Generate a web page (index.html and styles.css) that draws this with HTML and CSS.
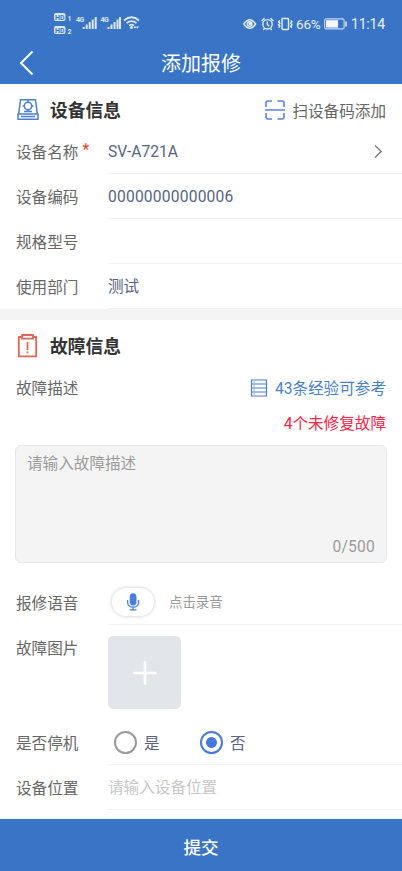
FILE: index.html
```html
<!DOCTYPE html>
<html lang="zh-CN">
<head>
<meta charset="utf-8">
<meta name="viewport" content="width=device-width, initial-scale=1">
<title>添加报修</title>
<link rel="stylesheet" href="styles.css">
</head>
<body>
<div class="app">
  <header class="top">
    <div class="status">
      <svg class="signals" width="90" height="26" viewBox="0 0 90 26">
        <g fill="#dce8f9">
          <rect x="0" y="1" width="11.500" height="8" rx="2"/>
          <rect x="0" y="14" width="11.500" height="8" rx="2"/>
          <path d="M29 15h2v2h-2zM32 12.500h2v4.500h-2zM35 10h2v7h-2zM38 7.500h2v9.500h-2zM41 5h2v12h-2z" transform="translate(-.3 0)"/>
          <path d="M53.500 15h2v2h-2zM56.500 12.500h2v4.500h-2zM59.500 10h2v7h-2zM62.500 7.500h2v9.500h-2zM65 5h2v12h-2z"/>
          <circle cx="77.500" cy="15.500" r="1.500"/>
          <path d="M79.500 16l1.500-2.300 1.500 2.300zM82 14.500l1.500 2.300 1.500-2.300z"/>
        </g>
        <g fill="none" stroke="#dce8f9" stroke-width="1.700">
          <path d="M70 8.500q7.500-6.500 15 0M72.500 11.200q5-4.200 10 0M75 13.600q2.500-2 5 0"/>
        </g>
        <g class="tiny">
          <text class="hd" x="1" y="7.600">HD</text>
          <text class="hd" x="1" y="20.600">HD</text>
          <text x="13.500" y="9">1</text>
          <text x="13.500" y="22">2</text>
          <text class="net" x="22" y="10.300">4G</text>
          <text class="net" x="46.500" y="10.300">4G</text>
        </g>
      </svg>
      <div class="status-right">
        <svg width="51" height="16" viewBox="0 0 51 16" fill="none" stroke="#e4edfa" stroke-width="1.400">
          <path d="M.8 8q5.900-8.500 11.800 0q-5.900 8.500-11.800 0z"/>
          <circle cx="6.700" cy="8" r="2.300"/><circle cx="7.200" cy="7.600" r="1" fill="#e4edfa"/>
          <circle cx="24.500" cy="8.300" r="4.700"/>
          <path d="M18.600 5l3-2.800M30.400 5l-3-2.800M24.300 5.500v3l2 1.700M21.500 12.500l-1.200 1.500M27.500 12.500l1.200 1.500"/>
          <rect x="39" y="2.500" width="6.500" height="11" rx=".7"/>
          <path d="M36.800 4.500l-1.200 1.300 1.200 1.500-1.200 1.500 1.200 1.500-1.200 1.500M47.700 4.500l1.200 1.300-1.200 1.500 1.200 1.500-1.200 1.500 1.200 1.500"/>
        </svg>
        <span class="percent">66%</span>
        <svg class="battery" width="24" height="12" viewBox="0 0 24 12">
          <rect x=".6" y=".9" width="19.500" height="10" rx="1.500" fill="none" stroke="#c6d9f3" stroke-width="1.100"/>
          <path d="M2 2.200h12v7.400H2z" fill="#f2f7ff"/><path d="M21.300 3.500h1.500v5h-1.500z" fill="#e4edfa"/>
        </svg>
        <span class="clock">11:14</span>
      </div>
    </div>
    <div class="nav">
      <svg class="back" width="16" height="26" viewBox="0 0 16 26"><path d="M13.500 1.500L2 13l11.500 11.500" fill="none" stroke="#fff" stroke-width="1.900"/></svg>
      <h1>添加报修</h1>
    </div>
  </header>

  <main>
    <section class="device">
      <div class="heading">
        <svg class="heading-icon" width="24" height="24" viewBox="0 0 24 24" fill="none" stroke="#4a7fd0" stroke-width="1.500">
          <path d="M4.500 1.700h15l1.800 14.300H2.700zM2 16h20v5.200H2zM5 18.600h14" stroke-linejoin="round"/>
          <circle cx="12" cy="8" r="3.700"/><path d="M12 1.700v3M12 11.700v2.200M8 13.600h8M6.600 8h1.700M15.700 8h1.700"/>
        </svg>
        <h2>设备信息</h2>
        <div class="scan">
          <svg width="20" height="20" viewBox="0 0 20 20" fill="none" stroke="#5b84e5" stroke-width="1.600">
            <path d="M1 7V3q0-2 2-2h4M12.500 1H17q2 0 2 2v4M1 13v4q0 2 2 2h4M12.500 19H17q2 0 2-2v-4M0 10h20"/>
          </svg>
          <span>扫设备码添加</span>
        </div>
      </div>
      <div class="row">
        <label>设备名称<i class="required">*</i></label>
        <div class="value">SV-A721A
          <svg class="chevron" width="9" height="15" viewBox="0 0 9 15"><path d="M1 1.500l6.200 6L1 13.500" fill="none" stroke="#777" stroke-width="1.300"/></svg>
        </div>
      </div>
      <div class="row"><label>设备编码</label><div class="value digits">00000000000006</div></div>
      <div class="row"><label>规格型号</label><div class="value"></div></div>
      <div class="row"><label>使用部门</label><div class="value">测试</div></div>
    </section>

    <section class="fault">
      <div class="heading">
        <svg class="heading-icon" width="24" height="26" viewBox="0 0 24 26" fill="none" stroke="#e06458" stroke-width="1.800">
          <path d="M6 4H2.800v19.400h17.400V4H17M6 2h11v3.700H6z" stroke-linejoin="round"/>
          <path d="M11.500 9v8M11.500 18.500v1.700"/>
        </svg>
        <h2>故障信息</h2>
      </div>
      <div class="describe">
        <label>故障描述</label>
        <div class="links">
          <div class="experience">
            <svg width="18" height="18" viewBox="0 0 18 18" fill="none" stroke="#4a7fcc" stroke-width="1.200">
              <path d="M1.500 1h15v16h-15zM1.500 5h15M1.500 9h15M1.500 13h15"/>
              <path d="M3.500 3h1.200M3.500 7h1.200M3.500 11h1.200M3.500 15h1.200"/>
            </svg>
            <span>43条经验可参考</span>
          </div>
          <div class="unrepaired">4个未修复故障</div>
        </div>
      </div>
      <div class="textbox"><span>请输入故障描述</span><span class="count">0/500</span></div>
      <div class="row voice">
        <label>报修语音</label>
        <div class="value">
          <span class="mic"><svg width="14" height="18" viewBox="0 0 14 18">
            <rect x="3.700" y=".3" width="6.800" height="12.200" rx="3.400" fill="#4c7de0"/>
            <path d="M1.600 7v2.200c0 6.600 11 6.600 11 0V7M7.100 14v2.700M3.700 16.800h6.800" fill="none" stroke="#4c7de0" stroke-width="1.300"/>
          </svg></span>
          <span class="record">点击录音</span>
        </div>
      </div>
      <div class="photo">
        <label>故障图片</label>
        <div class="add"><svg width="24" height="24" viewBox="0 0 24 24"><path d="M12 1.500v21M1.500 12h21" stroke="#fff" stroke-width="2.500" stroke-linecap="round"/></svg></div>
      </div>
      <div class="row">
        <label>是否停机</label>
        <div class="value options">
          <span class="option"><i class="radio"></i><span>是</span></span>
          <span class="option"><i class="radio checked"></i><span>否</span></span>
        </div>
      </div>
      <div class="row"><label>设备位置</label><div class="value placeholder">请输入设备位置</div></div>
    </section>
  </main>
  <footer>提交</footer>
</div>
</body>
</html>
```
FILE: styles.css
```css
* { box-sizing: border-box; }
body {
  margin: 0;
  background: #fff;
  font-family: Roboto, "Noto Sans CJK SC", sans-serif;
  font-size: 15.6px;
  line-height: 24px;
  color: #666;
}
svg { display: block; flex: none; }
h1, h2 { margin: 0; }
i { font-style: normal; }
.app { width: 402px; height: 871px; display: flex; flex-direction: column; overflow: hidden; }
.top { height: 84px; flex: none; background: #3a74c7; color: #fff; }
.status { height: 40px; padding: 12px 17px 0 54px; display: flex; justify-content: space-between; }
.tiny { fill: #dce8f9; font-family: Roboto, sans-serif; font-size: 7px; font-weight: 700; }
.tiny .hd { fill: #3a74c7; font-size: 7px; }
.tiny .net { font-size: 7px; font-weight: 700; letter-spacing: -.6px; }
.status-right { display: flex; align-items: center; height: 24px; color: #e8f0fc; font-size: 14px; }
.percent { margin-left: 2px; width: 27px; font-size: 13.5px; letter-spacing: -.2px; }
.battery { margin-left: 1px; }
.clock { margin-left: 3px; width: 34px; font-size: 14px; letter-spacing: -.2px; white-space: nowrap; }
.nav { height: 44px; display: grid; grid-template-columns: 60px 1fr 60px; align-items: center; }
.back { margin-left: 19px; }
.nav h1 { padding-top: 2px; text-align: center; font-size: 20px; font-weight: 400; line-height: 44px; }
.device { height: 225px; }
.heading { height: 45px; padding: 7px 16px 0 16px; display: flex; align-items: center; }
.heading h2 { margin-left: 10px; padding-top: 2px; font-size: 17.8px; font-weight: 700; color: #333; }
.scan { margin-left: auto; display: flex; align-items: center; gap: 7px; }
.scan span { padding-top: 3px; }
.row { height: 45px; padding-left: 16px; display: flex; }
.row label { width: 92px; flex: none; line-height: 48px; white-space: nowrap; }
.required { margin-left: 4px; color: #f2402e; position: relative; top: -3px; }
.value { flex: 1; display: flex; align-items: center; padding-top: 2px; border-bottom: 1px solid #f1f1f1; color: #566482; }
.digits { letter-spacing: .2px; }
.chevron { margin: -2px 19px 0 auto; }
.fault { border-top: 11px solid #f4f4f4; }
.describe { height: 80px; padding: 12px 16px 0; display: flex; justify-content: space-between; }
.links { display: flex; flex-direction: column; align-items: flex-end; gap: 11px; }
.experience { display: flex; align-items: center; gap: 7px; color: #4a7fcc; }
.experience svg { margin-top: -3px; }
.unrepaired { color: #ff2348; }
.textbox {
  height: 118px;
  margin: 0 15px 17px;
  padding: 6px 11px 3px;
  display: flex;
  flex-direction: column;
  justify-content: space-between;
  border: 1px solid #e6e8ea;
  border-radius: 6px;
  background: #f4f4f4;
  color: #9b9b9b;
}
.count { align-self: flex-end; letter-spacing: .2px; }
.mic {
  width: 42px;
  height: 28px;
  margin: 0 0 3px 4px;
  display: flex;
  align-items: center;
  justify-content: center;
  border-radius: 14px;
  box-shadow: 0 0 3px 1px #ddd;
}
.record { margin-left: 15px; font-size: 13.4px; color: #999; }
.photo { height: 95px; padding-left: 16px; display: flex; }
.photo label { width: 92px; line-height: 48px; }
.add {
  width: 73px;
  height: 73px;
  margin-top: 11px;
  display: flex;
  align-items: center;
  justify-content: center;
  border-radius: 5px;
  background: #e2e6eb;
}
.options { padding: 0 0 0 6px; }
.option { width: 86px; display: flex; align-items: center; gap: 7px; }
.option span { padding-top: 3px; }
.radio { width: 23px; height: 23px; border: 2px solid #999; border-radius: 50%; }
.checked { border-color: #4878dc; background: radial-gradient(circle, #4878dc 5px, #fff 5.8px); }
.placeholder { color: #c7c7c7; }
footer {
  height: 52px;
  margin-top: auto;
  flex: none;
  background: #3a74c7;
  color: #fff;
  text-align: center;
  font-size: 17.6px;
  font-weight: 500;
  line-height: 59px;
}
```
